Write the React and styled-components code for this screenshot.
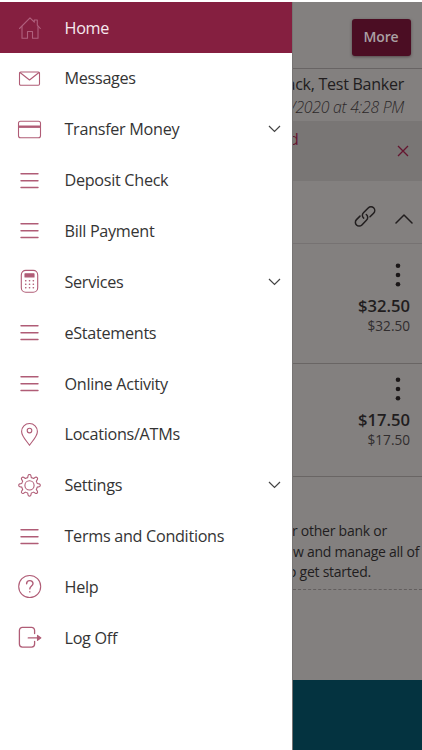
import React from 'react';
import styled, { createGlobalStyle } from 'styled-components';

const GlobalStyle = createGlobalStyle`
  * {
    box-sizing: border-box;
  }
  body {
    margin: 0;
    background: #fff;
    font-family: 'Open Sans', 'Noto Sans', sans-serif;
  }
`;

const Screen = styled.div`
  display: flex;
  width: 422px;
  height: 750px;
  padding-top: 2px;
  overflow: hidden;
`;

const Drawer = styled.nav`
  flex: none;
  width: 292px;
  background: #fff;
`;

const MenuItem = styled.div`
  display: flex;
  align-items: center;
  height: 50.87px;
  padding: 0 11px 0 17px;
  color: ${props => (props.$active ? '#f6e9ee' : '#343434')};
  background: ${props => (props.$active ? '#851f40' : 'transparent')};
`;

const MenuIcon = styled.svg`
  flex: none;
  width: 25px;
  height: 25px;
  margin-right: 22.5px;
  overflow: visible;
  fill: none;
  stroke: ${props => (props.$active ? '#b0607d' : '#b05c76')};
  stroke-width: 1.1;
  stroke-linecap: round;
  stroke-linejoin: round;
`;

const MenuLabel = styled.span`
  flex: 1;
  padding-top: 0.3px;
  font-size: 16.2px;
  letter-spacing: -0.3px;
  line-height: 24px;
  white-space: nowrap;
`;

const Chevron = styled.svg`
  width: 13px;
  height: 8px;
  fill: none;
  stroke: #444;
  stroke-width: 1.2;
`;

const Page = styled.main`
  flex: 1;
  min-width: 0;
  display: flex;
  flex-direction: column;
  overflow: hidden;
  color: #211d1e;
  background: #83807f;
  border-left: 1px solid #777473;
`;

const TopBar = styled.div`
  flex: none;
  display: flex;
  justify-content: flex-end;
  height: 67px;
  padding: 17px 11.5px 0 0;
  border-bottom: 1px solid #686464;
`;

const MoreButton = styled.button`
  width: 59px;
  height: 37px;
  padding: 0 0 3px;
  border: 0;
  border-radius: 3px;
  color: #aaa0a3;
  background: #4b0d23;
  box-shadow: 0 1px 3px rgba(40, 20, 25, 0.5);
  font-family: inherit;
  font-size: 14px;
  font-weight: 600;
  letter-spacing: -0.2px;
`;

const Welcome = styled.div`
  flex: none;
  display: flex;
  flex-direction: column;
  align-items: flex-end;
  height: 52px;
  padding: 4px 18px 0 0;
  font-size: 16px;
  letter-spacing: -0.25px;
  line-height: 23px;
  white-space: nowrap;
`;

const LastLogin = styled.em`
  color: #2c2829;
  font-size: 15.8px;
  font-weight: 300;
`;

const Notice = styled.div`
  flex: none;
  display: flex;
  justify-content: space-between;
  height: 60px;
  padding: 7px 13.5px 0 0;
  color: #65152f;
  background: #797675;
  font-size: 16px;
  line-height: 23px;
`;

const NoticeText = styled.span`
  margin-left: -4px;
`;

const CloseIcon = styled.svg`
  width: 12px;
  height: 12px;
  margin-top: 17px;
  fill: none;
  stroke: #65152f;
  stroke-width: 1.3;
`;

const Tools = styled.div`
  flex: none;
  display: flex;
  justify-content: flex-end;
  gap: 19px;
  height: 63px;
  padding: 24px 9px 0 0;
  border-bottom: 1px solid #767272;
`;

const ToolIcon = styled.svg`
  width: ${props => props.$width}px;
  height: 23px;
  fill: none;
  stroke: #211d1e;
  stroke-width: 1.5;
  stroke-linecap: round;
  stroke-linejoin: round;
`;

const Account = styled.div`
  flex: none;
  display: flex;
  flex-direction: column;
  align-items: flex-end;
  height: ${props => props.$height}px;
  padding: ${props => props.$top}px 12px 0 0;
  border-bottom: 1px solid #696564;
`;

const Dots = styled.svg`
  width: 6px;
  height: 24px;
  margin: 0 9px 8px 0;
  fill: #1b1718;
`;

const Balance = styled.strong`
  font-size: 16.6px;
  font-weight: 600;
  line-height: 22px;
`;

const Available = styled.span`
  color: #312d2e;
  font-size: 13.6px;
  line-height: 17px;
`;

const Promo = styled.div`
  flex: none;
  height: 113px;
  padding-top: 44px;
  border-bottom: 1px dashed #625e5e;
  font-size: 14px;
  letter-spacing: -0.25px;
  line-height: 20.7px;
  white-space: nowrap;
`;

const PromoLine = styled.div`
  margin-left: ${props => props.$shift}px;
`;

const Footer = styled.footer`
  flex: none;
  height: 70px;
  margin-top: auto;
  background: #043340;
`;

const icons = {
  home: (
    <>
      <path d="M2.5 13.5 13 2.8l4.3 4.4V5h3v5.2l3 3.3" />
      <path d="M5 11.5v11.7h5.5v-6.7h5v6.7H21V11.5" />
    </>
  ),
  mail: (
    <>
      <rect x="2.5" y="6" width="20" height="13.2" rx="1.2" />
      <path d="m3 6.5 9.5 7.5L22 6.5" />
    </>
  ),
  card: (
    <>
      <rect x="1.5" y="4.3" width="22" height="16.4" rx="2" />
      <path d="M2 9.7h21" strokeWidth="2.4" strokeLinecap="butt" />
    </>
  ),
  list: <path d="M4 5.8h17M4 12.7h17M4 19.5h17" strokeWidth="1.4" />,
  calculator: (
    <>
      <rect x="4.3" y="1.4" width="16.4" height="21.8" rx="4.5" />
      <rect x="8" y="4.9" width="9" height="3" fill="#b05c76" />
      <path
        d="M8.7 11.7h.1M12.5 11.7h.1M16.3 11.7h.1M8.7 15.2h.1M12.5 15.2h.1M16.3 15.2h.1M8.7 18.7h.1M12.5 18.7h.1M16.3 18.7h.1"
        strokeWidth="1.6"
      />
    </>
  ),
  pin: (
    <>
      <path d="M12.5 23.3C9.6 18.8 4.6 14.2 4.6 9.4a7.9 7.9 0 0 1 15.8 0c0 4.8-5 9.4-7.9 13.9Z" />
      <circle cx="12.5" cy="8.6" r="2.3" />
    </>
  ),
  // eight rounded teeth, each quarter turn mirrors the previous one
  gear: (
    <>
      <path d="M10.7 4.6 11.1 2.5q.2-1 1.4-1t1.4 1l.4 2.1q1.3.3 2.3.9l1.8-1.2q1-.6 1.8.3t.2 1.8l-1.1 1.8q.6 1 .9 2.3l2.1.4q1 .2 1 1.4t-1 1.4l-2.1.4q-.3 1.3-.9 2.3l1.1 1.8q.6 1-.2 1.8t-1.8.3l-1.8-1.2q-1 .6-2.3.9l-.4 2.1q-.2 1-1.4 1t-1.4-1l-.4-2.1q-1.3-.3-2.3-.9l-1.8 1.2q-1 .6-1.8-.3t-.2-1.8l1.1-1.8q-.6-1-.9-2.3l-2.1-.4q-1-.2-1-1.4t1-1.4l2.1-.4q.3-1.3.9-2.3L4.6 6.4q-.6-1 .2-1.8t1.8-.3l1.8 1.2q1-.6 2.3-.9Z" />
      <circle cx="12.5" cy="12.4" r="4.6" />
    </>
  ),
  help: (
    <>
      <circle cx="12.7" cy="12.5" r="11" />
      <path
        d="M9.6 9.7c0-4 6.4-4 6.4-.3 0 2.5-3.2 2.6-3.2 5.5M12.8 17.8v.1"
        strokeWidth="1.4"
      />
    </>
  ),
  logout: (
    <>
      <path
        d="M17.6 8.5V5.4a3 3 0 0 0-3-3H5.4a3 3 0 0 0-3 3v13.7a3 3 0 0 0 3 3h9.2a3 3 0 0 0 3-3v-2.8"
        strokeWidth="1.3"
      />
      <path d="M11.3 12.9h9" strokeWidth="1.4" />
      <path d="m20.5 10.4 3.4 2.5-3.4 2.5Z" fill="#b05c76" />
    </>
  ),
};

const menu = [
  { label: 'Home', icon: 'home', active: true },
  { label: 'Messages', icon: 'mail' },
  { label: 'Transfer Money', icon: 'card', expandable: true },
  { label: 'Deposit Check', icon: 'list' },
  { label: 'Bill Payment', icon: 'list' },
  { label: 'Services', icon: 'calculator', expandable: true },
  { label: 'eStatements', icon: 'list' },
  { label: 'Online Activity', icon: 'list' },
  { label: 'Locations/ATMs', icon: 'pin' },
  { label: 'Settings', icon: 'gear', expandable: true },
  { label: 'Terms and Conditions', icon: 'list' },
  { label: 'Help', icon: 'help' },
  { label: 'Log Off', icon: 'logout' },
];

const AccountRow = props => {
  const { amount, height, top } = props;
  return (
    <Account $height={height} $top={top}>
      <Dots viewBox="0 0 6 24">
        <circle cx="3" cy="2.7" r="2.3" />
        <circle cx="3" cy="12" r="2.3" />
        <circle cx="3" cy="21.3" r="2.3" />
      </Dots>
      <Balance>{amount}</Balance>
      <Available>{amount}</Available>
    </Account>
  );
};

const App = () => {
  return (
    <Screen>
      <GlobalStyle />
      <Drawer>
        {menu.map(item => (
          <MenuItem key={item.label} $active={item.active}>
            <MenuIcon viewBox="0 0 25 25" $active={item.active}>
              {icons[item.icon]}
            </MenuIcon>
            <MenuLabel>{item.label}</MenuLabel>
            {item.expandable && (
              <Chevron viewBox="0 0 13 8">
                <path d="m1 1 5.5 5.5L12 1" />
              </Chevron>
            )}
          </MenuItem>
        ))}
      </Drawer>
      <Page>
        <TopBar>
          <MoreButton>More</MoreButton>
        </TopBar>
        <Welcome>
          <span>ack, Test Banker</span>
          <LastLogin>/2020 at 4:28 PM</LastLogin>
        </Welcome>
        <Notice>
          <NoticeText>d</NoticeText>
          <CloseIcon viewBox="0 0 12 12">
            <path d="m1 1 10 10M11 1 1 11" />
          </CloseIcon>
        </Notice>
        <Tools>
          <ToolIcon viewBox="0 0 22 23" $width={22}>
            <path d="M9.7 13.1C7.8 11.4 8 9.2 9.7 7.5l4.5-4.6c1.7-1.7 4-1.5 5.4-.1s1.6 3.8 0 5.4l-3.6 3.6" />
            <path d="M12.3 9.5c1.9 1.7 1.8 4.1.1 5.8l-4.5 4.6c-1.7 1.7-4 1.5-5.4.1s-1.6-3.8 0-5.4L6 11.1" />
          </ToolIcon>
          <ToolIcon viewBox="0 0 18 23" $width={18}>
            <path d="m1 18 8-8 8 8" />
          </ToolIcon>
        </Tools>
        <AccountRow amount="$32.50" height={119.5} top={19} />
        <AccountRow amount="$17.50" height={113.5} top={13} />
        <Promo>
          <PromoLine $shift={-1}>r other bank or</PromoLine>
          <PromoLine $shift={0}>w and manage all of</PromoLine>
          <PromoLine $shift={-5}>o get started.</PromoLine>
        </Promo>
        <Footer />
      </Page>
    </Screen>
  );
};

export default App;
